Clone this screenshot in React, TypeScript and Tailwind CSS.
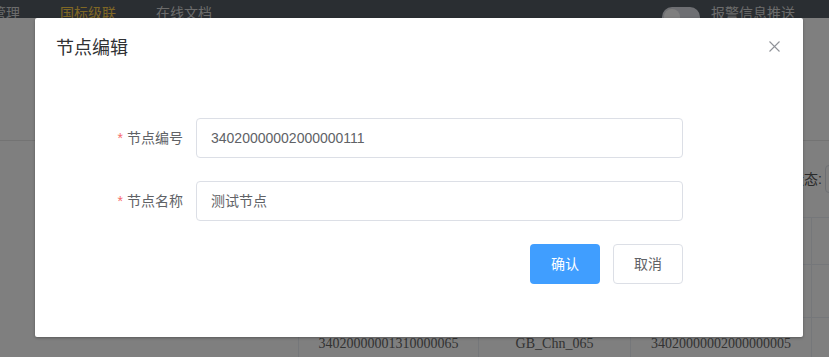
import React from "react";

const sans = "font-['Liberation_Sans','Noto_Sans_CJK_SC',sans-serif]";

const rows = [
    ["", "", "", ""],
    ["34020000001310000065", "GB_Chn_065", "34020000002000000005", ""],
];

const NodeEditDialog: React.FC = () => {
    return (
        <div className={`absolute left-[35px] top-[18px] w-[768px] bg-white rounded-[2px] shadow-[0_1px_3px_rgba(0,0,0,0.3)] ${sans}`}>
            <div className="flex items-center justify-between pl-[21px] pr-[23px] h-[60px]">
                <span className="text-[18px] leading-6 text-[#303133]">节点编辑</span>
                <svg width="11" height="11" viewBox="0 0 11 11" className="text-[#909399] -mt-[4px]">
                    <path d="M0.5 0.5L10.5 10.5M10.5 0.5L0.5 10.5" stroke="currentColor" strokeWidth="1.1" />
                </svg>
            </div>

            <div className="pt-[40px] pb-[53px] flex flex-col gap-[23px]">
                <div className="flex items-center">
                    <label className="w-[161px] pr-[13px] text-right text-sm text-[#606266]">
                        <span className="text-[#f56c6c] mr-[4px]">*</span>节点编号
                    </label>
                    <div className="w-[487px] h-[40px] border border-[#dcdfe6] rounded-[4px] flex items-center px-[14px] text-sm text-[#606266]">
                        34020000002000000111
                    </div>
                </div>
                <div className="flex items-center">
                    <label className="w-[161px] pr-[13px] text-right text-sm text-[#606266]">
                        <span className="text-[#f56c6c] mr-[4px]">*</span>节点名称
                    </label>
                    <div className="w-[487px] h-[40px] border border-[#dcdfe6] rounded-[4px] flex items-center px-[14px] text-sm text-[#606266]">
                        测试节点
                    </div>
                </div>
                <div className="flex justify-end gap-[13px] w-[648px]">
                    <button className="w-[70px] h-[40px] rounded-[4px] bg-[#409eff] text-white text-sm">确认</button>
                    <button className="w-[70px] h-[40px] rounded-[4px] border border-[#dcdfe6] bg-white text-[#606266] text-sm">取消</button>
                </div>
            </div>
        </div>
    );
};

export default function App() {
    return (
        <div className={`relative w-[829px] h-[357px] overflow-hidden bg-white ${sans}`}>
            <div className="h-[18px] overflow-hidden bg-[#545c64] flex justify-between text-sm">
                <div className="flex gap-[40px] ml-[-8px] pt-[3px] leading-5">
                    <span className="text-[#d8d8d8]">管理</span>
                    <span className="text-[#ffd04b]">国标级联</span>
                    <span className="text-[#d8d8d8]">在线文档</span>
                </div>
                <div className="flex items-start gap-[11px] pr-[34px] pt-[7px]">
                    <div className="w-[38px] h-[20px] rounded-full bg-[#dcdfe6] p-[2px]">
                        <div className="w-[16px] h-[16px] rounded-full bg-white" />
                    </div>
                    <span className="text-[#d8d8d8] leading-5 -mt-[4px]">报警信息推送</span>
                </div>
            </div>

            <div className="h-[123px] border-b border-[#e6e6e6]" />

            <div className="h-[76px] flex items-center pl-[790px] text-sm text-[#555] whitespace-nowrap">
                <span>状态:</span>
                <div className="ml-[3px] w-[120px] h-[28px] border border-[#dcdfe6] rounded-[4px] shrink-0" />
            </div>

            <div className="ml-[298px] font-['Liberation_Serif','Noto_Sans_CJK_SC',serif] text-sm text-[#666]">
                <div className="grid grid-cols-[180px_152px_181px_200px] h-[47px] border-t border-[#ebeef5]">
                    <div className="border-l border-[#ebeef5]" />
                    <div className="border-l border-[#ebeef5]" />
                    <div className="border-l border-[#ebeef5]" />
                    <div className="border-l border-[#ebeef5]" />
                </div>
                {rows.map((row, i) => (
                    <div key={i} className="grid grid-cols-[180px_152px_181px_200px] h-[53px] border-t border-[#ebeef5]">
                        {row.map((cell, j) => (
                            <div key={j} className="border-l border-[#ebeef5] flex items-center justify-center">
                                {cell}
                            </div>
                        ))}
                    </div>
                ))}
            </div>

            <div className="absolute inset-0 bg-black/50" />
            <NodeEditDialog />
        </div>
    );
}
